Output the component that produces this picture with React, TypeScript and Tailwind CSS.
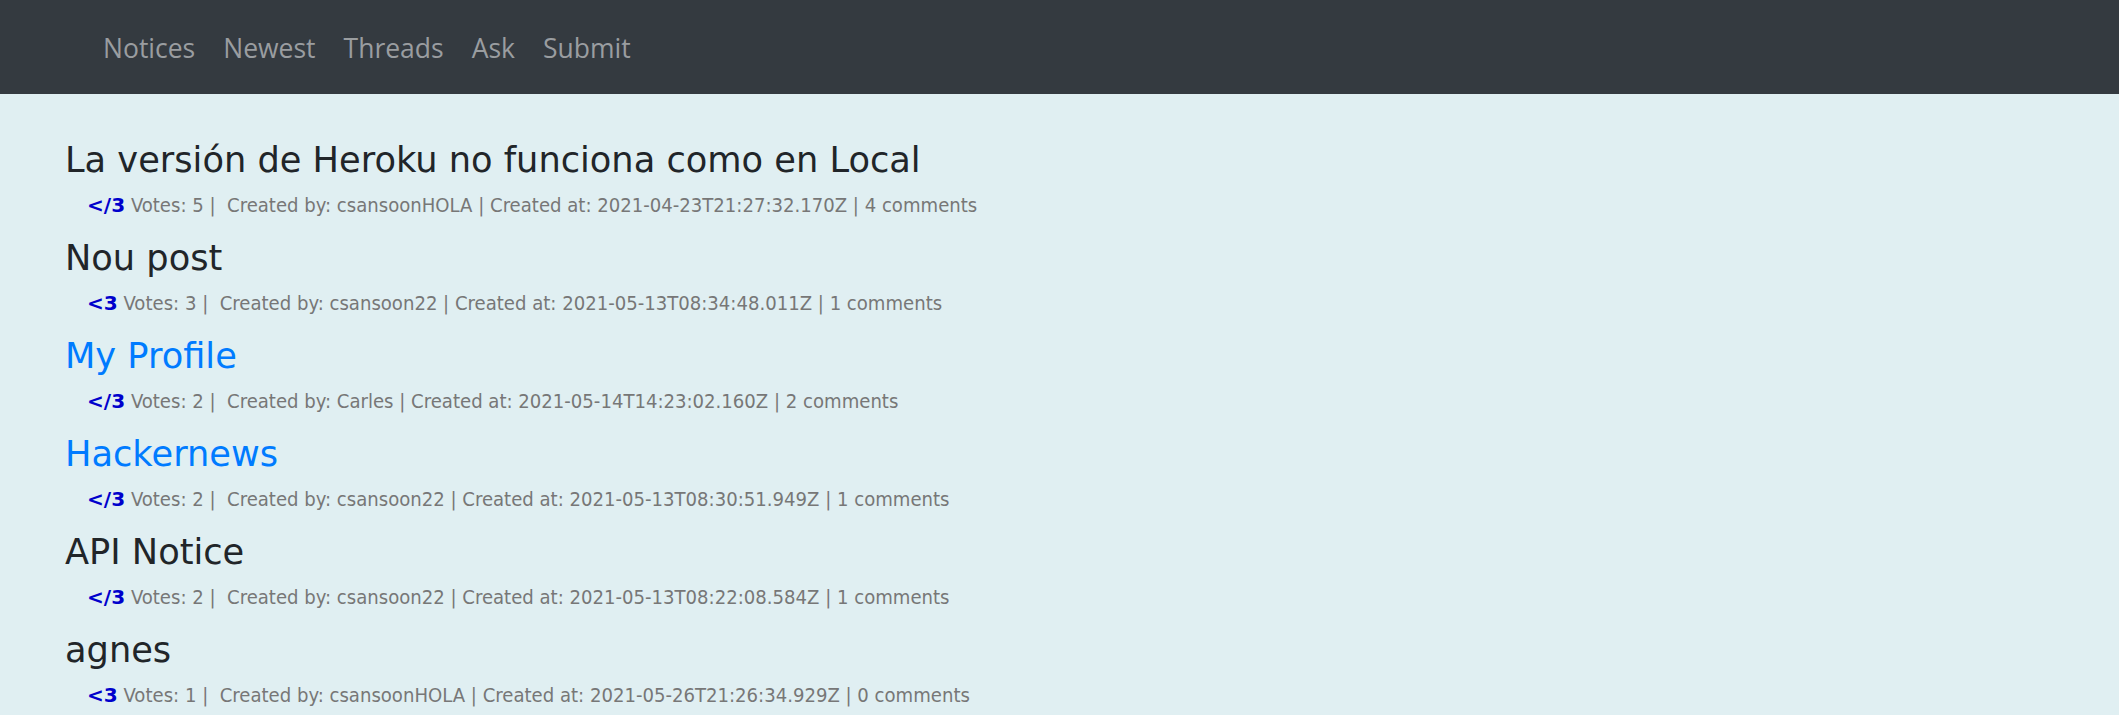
import React from 'react';

type Post = {
  title: string;
  link: boolean;
  liked: boolean;
  votes: number;
  author: string;
  createdAt: string;
  comments: number;
};

const posts: Post[] = [
  { title: 'La versión de Heroku no funciona como en Local', link: false, liked: true, votes: 5, author: 'csansoonHOLA', createdAt: '2021-04-23T21:27:32.170Z', comments: 4 },
  { title: 'Nou post', link: false, liked: false, votes: 3, author: 'csansoon22', createdAt: '2021-05-13T08:34:48.011Z', comments: 1 },
  { title: 'My Profile', link: true, liked: true, votes: 2, author: 'Carles', createdAt: '2021-05-14T14:23:02.160Z', comments: 2 },
  { title: 'Hackernews', link: true, liked: true, votes: 2, author: 'csansoon22', createdAt: '2021-05-13T08:30:51.949Z', comments: 1 },
  { title: 'API Notice', link: false, liked: true, votes: 2, author: 'csansoon22', createdAt: '2021-05-13T08:22:08.584Z', comments: 1 },
  { title: 'agnes', link: false, liked: false, votes: 1, author: 'csansoonHOLA', createdAt: '2021-05-26T21:26:34.929Z', comments: 0 },
];

const navItems = ['Notices', 'Newest', 'Threads', 'Ask', 'Submit'];

function PostItem({ post }: { post: Post }) {
  return (
    <div className="mb-[17px]">
      {/* Title */}
      <div
        className={`text-[35.2px] leading-[42px] ${post.link ? 'text-[#007bff]' : 'text-[#212529]'}`}
      >
        {post.title}
      </div>
      {/* Meta line */}
      <div className="mt-[9px] pl-[22px] font-['DejaVu_Sans_Condensed','DejaVu_Sans',sans-serif] font-stretch-condensed text-[20.1px] leading-[30px] text-[#777777] whitespace-pre">
        <span className="font-['DejaVu_Sans',sans-serif] font-stretch-normal font-bold text-[#0000cc]">
          {post.liked ? '</3' : '<3'}
        </span>
        {` Votes: ${post.votes} |  Created by: ${post.author} | Created at: ${post.createdAt} | ${post.comments} comments`}
      </div>
    </div>
  );
}

export default function App() {
  return (
    <div className="min-h-screen bg-[#e0eff2] font-['DejaVu_Sans',Verdana,sans-serif]">
      {/* Top navbar */}
      <nav className="h-[94px] bg-[#343a40] flex items-center pl-[89px]">
        <ul className="flex items-center font-['Open_Sans',sans-serif] text-[26.5px] text-[#9a9da0]">
          {navItems.map((item) => (
            <li key={item}>
              <a href="#" className="block px-[14px] pt-[3px]">
                {item}
              </a>
            </li>
          ))}
        </ul>
      </nav>

      {/* Post list */}
      <main className="pt-[45px] pl-[65px]">
        {posts.map((post) => (
          <PostItem key={post.title} post={post} />
        ))}
      </main>
    </div>
  );
}
